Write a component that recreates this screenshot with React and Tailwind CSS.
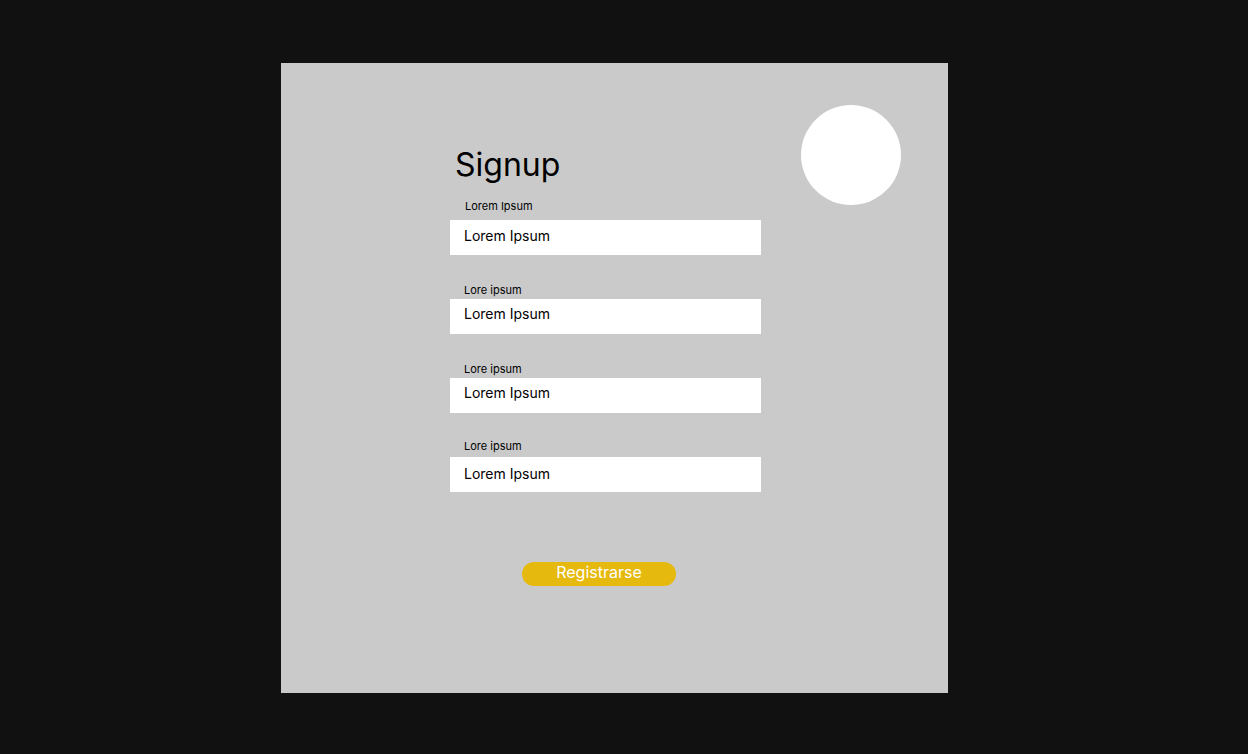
import React from 'react';

const fields = [
  { label: 'Lorem Ipsum', labelClass: 'mt-[14px] ml-[15px] mb-[7px]', inputClass: 'pb-[5px]' },
  { label: 'Lore ipsum', labelClass: 'mt-[28px] ml-[14px] mb-[2px]', inputClass: 'pb-[6px]' },
  { label: 'Lore ipsum', labelClass: 'mt-[28px] ml-[14px] mb-[2px]', inputClass: 'pb-[6px]' },
  { label: 'Lore ipsum', labelClass: 'mt-[26px] ml-[14px] mb-[4px]', inputClass: 'pb-[3px]' },
];

export default function App() {
  return (
    <div className="min-h-screen w-full bg-[#111111] pl-[281px] pt-[63px] font-['Inter',sans-serif]">
      <div className="flex h-[630px] w-[667px] items-start bg-[#cacaca] pl-[169px] pt-[42px]">
        {/* Form column */}
        <div className="mt-[40px] flex w-[311px] flex-col">
          <h1 className="ml-[5px] text-[32px] font-normal leading-[40px] text-black">Signup</h1>

          {fields.map((f, i) => (
            <div key={i} className="flex flex-col">
              <label className={`${f.labelClass} text-[11px] leading-[14px] text-black`}>{f.label}</label>
              <div className={`${f.inputClass} flex h-[35px] w-[311px] items-center bg-white pl-[14px] text-[14px] text-black`}>
                Lorem Ipsum
              </div>
            </div>
          ))}

          <button className="ml-[72px] mt-[70px] flex h-[24px] w-[154px] items-center justify-center rounded-full bg-[#e6b90f] pb-[5px] text-[16px] leading-none text-white">
            Registrarse
          </button>
        </div>

        {/* Avatar placeholder */}
        <div className="ml-[40px] h-[100px] w-[100px] shrink-0 rounded-full bg-white" />
      </div>
    </div>
  );
}
